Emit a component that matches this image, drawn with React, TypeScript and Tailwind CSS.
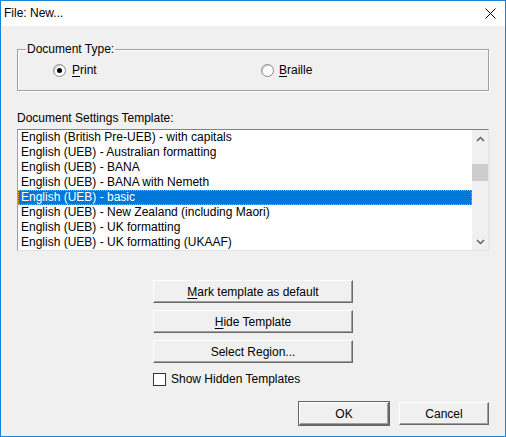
import { useState } from "react";

const templates = [
  "English (British Pre-UEB) - with capitals",
  "English (UEB) - Australian formatting",
  "English (UEB) - BANA",
  "English (UEB) - BANA with Nemeth",
  "English (UEB) - basic",
  "English (UEB) - New Zealand (including Maori)",
  "English (UEB) - UK formatting",
  "English (UEB) - UK formatting (UKAAF)",
];

function Radio(props: { checked: boolean }) {
  return (
    <span className="relative inline-flex h-[13px] w-[13px] shrink-0 items-center justify-center rounded-full border border-[#8a8a8a] bg-white shadow-[inset_1px_1px_0_#cfcfcf]">
      {props.checked && <span className="h-[5px] w-[5px] rounded-full bg-black" />}
    </span>
  );
}

function Button(props: { children: React.ReactNode; width: string; isDefault?: boolean }) {
  return (
    <button
      className={[
        "h-[23px] border border-t-white border-l-white border-r-[#696969] border-b-[#696969] bg-[#f0f0f0] text-center leading-[20px] shadow-[inset_-1px_-1px_0_#a0a0a0]",
        props.width,
        props.isDefault ? "outline outline-1 outline-[#646464]" : "",
      ].join(" ")}
    >
      {props.children}
    </button>
  );
}

function Chevron(props: { up?: boolean }) {
  return (
    <svg width="9" height="6" viewBox="0 0 9 6">
      <path
        d={props.up ? "M1 5 L4.5 1.5 L8 5" : "M1 1 L4.5 4.5 L8 1"}
        fill="none"
        stroke="#606060"
        strokeWidth="1.5"
      />
    </svg>
  );
}

export default function App() {
  const [selected, setSelected] = useState(4);
  const [print, setPrint] = useState(true);

  return (
    <div className="flex h-[437px] w-[506px] flex-col border border-[#1883d7] bg-[#f0f0f0] font-['Liberation_Sans',Arial,sans-serif] text-[12px] leading-[15px] text-black">
      {/* title bar */}
      <div className="flex h-[25px] shrink-0 items-center justify-between bg-white pl-[3px]">
        <span className="text-[12px]">File: New...</span>
        <div className="flex h-[25px] w-[30px] items-center justify-center">
          <svg width="11" height="11" viewBox="0 0 11 11">
            <path d="M0.5 0.5 L10.5 10.5 M10.5 0.5 L0.5 10.5" stroke="#000" strokeWidth="1" />
          </svg>
        </div>
      </div>

      <div className="flex flex-col px-[16px]">
        <fieldset className="mt-[16px] h-[49px] border border-[#a0a0a0] px-[8px] shadow-[inset_1px_1px_0_#fff,1px_1px_0_#fff]">
          <legend className="px-[1px] leading-[14px]">Document Type:</legend>
          <div className="mt-[7px] flex items-center">
            <label className="ml-[27px] flex w-[208px] items-center gap-[6px]" onClick={() => setPrint(true)}>
              <Radio checked={print} />
              <span>
                <u className="underline-offset-2">P</u>rint
              </span>
            </label>
            <label className="flex items-center gap-[5px]" onClick={() => setPrint(false)}>
              <Radio checked={!print} />
              <span>
                <u className="underline-offset-2">B</u>raille
              </span>
            </label>
          </div>
        </fieldset>

        <div className="mt-[20px]">Document Settings Template:</div>

        <div className="mt-[3px] flex h-[122px] border border-t-[#828282] border-l-[#a0a0a0] border-r-[#e3e3e3] border-b-[#e3e3e3] bg-white">
          <div className="flex flex-1 flex-col">
            {templates.map((t, i) => (
              <div
                key={t}
                onClick={() => setSelected(i)}
                className={[
                  "h-[15px] whitespace-nowrap pl-[3px] leading-[15px]",
                  i === selected ? "bg-[#0078d7] text-white outline outline-1 -outline-offset-1 outline-dotted outline-[#f0a030]" : "",
                ].join(" ")}
              >
                {t}
              </div>
            ))}
          </div>
          <div className="flex w-[16px] flex-col bg-[#f0f0f0]">
            <div className="flex h-[17px] items-center justify-center">
              <Chevron up />
            </div>
            <div className="mt-[17px] h-[17px] bg-[#cdcdcd]" />
            <div className="flex-1" />
            <div className="flex h-[17px] items-center justify-center">
              <Chevron />
            </div>
          </div>
        </div>

        <div className="ml-[136px] mt-[29px] flex flex-col gap-[7px]">
          <Button width="w-[200px]">
            <u className="underline-offset-2">M</u>ark template as default
          </Button>
          <Button width="w-[200px]">
            <u className="underline-offset-2">H</u>ide Template
          </Button>
          <Button width="w-[200px]">Select Region...</Button>
          <label className="mt-[2px] flex items-center gap-[5px]">
            <span className="h-[13px] w-[13px] border border-[#333] bg-white" />
            <span>Show Hidden Templates</span>
          </label>
        </div>

        <div className="mt-[15px] flex justify-end gap-[10px]">
          <Button width="w-[90px]" isDefault>
            OK
          </Button>
          <Button width="w-[90px]">Cancel</Button>
        </div>
      </div>
    </div>
  );
}
